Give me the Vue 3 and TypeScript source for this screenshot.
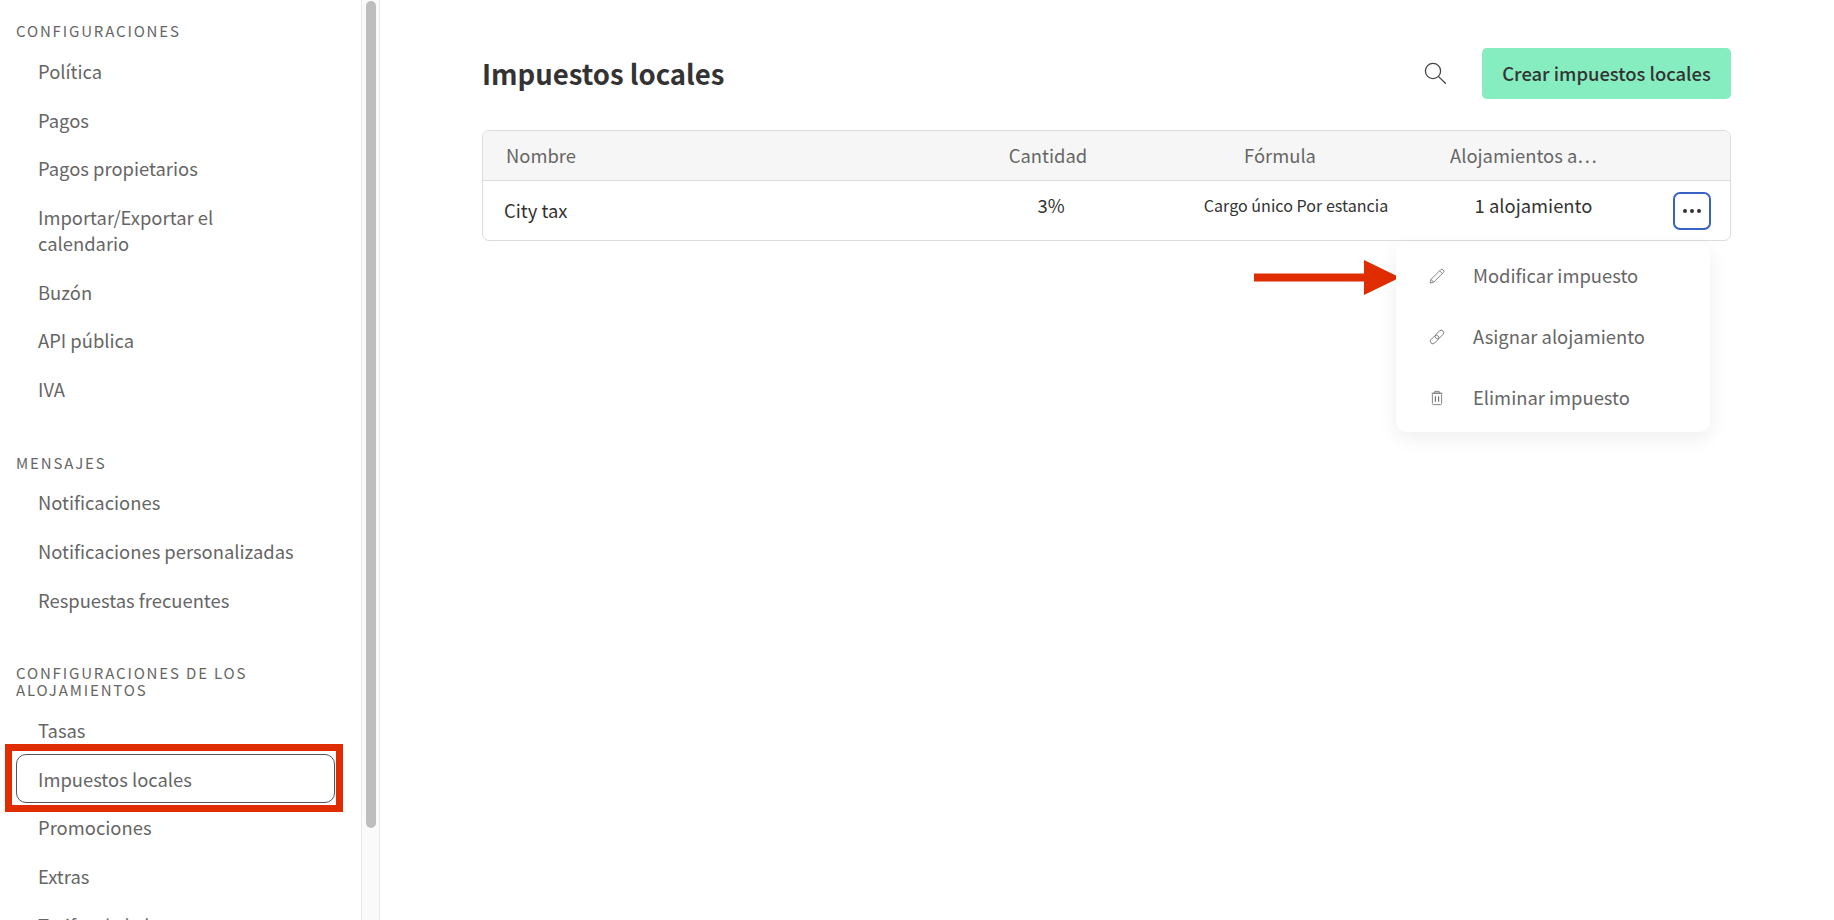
<template>
  <div class="page">
    <aside class="sidebar">
      <nav class="nav">
        <section v-for="group in groups" :key="group.title" class="group">
          <h3 class="group-title">{{ group.title }}</h3>
          <a
            v-for="item in group.items"
            :key="item"
            class="nav-item"
            :class="{ active: item === current }"
          >
            {{ item }}
            <span v-if="item === current" class="callout"></span>
          </a>
        </section>
      </nav>
      <div class="track"><div class="thumb"></div></div>
    </aside>

    <main class="main">
      <header class="head">
        <h1 class="title">Impuestos locales</h1>
        <svg class="search" width="24" height="24" viewBox="0 0 24 24" fill="none" stroke="#444" stroke-width="1.3">
          <circle cx="10" cy="10" r="7.6" />
          <path d="M15.6 15.6 22.4 22.2" stroke-linecap="round" />
        </svg>
        <button type="button" class="create">Crear impuestos locales</button>
      </header>

      <div class="table-wrap">
        <div class="table">
          <div class="row row-head">
            <div class="th th-name">Nombre</div>
            <div class="th th-qty">Cantidad</div>
            <div class="th th-formula">Fórmula</div>
            <div class="th th-rooms">Alojamientos a…</div>
            <div></div>
          </div>
          <div class="row row-body">
            <div class="td td-name">City tax</div>
            <div class="td td-center">3%</div>
            <div class="td td-center td-small">Cargo único Por estancia</div>
            <div class="td td-center">1 alojamiento</div>
            <div class="td-action">
              <button type="button" class="more" aria-label="Más">
                <i></i><i></i><i></i>
              </button>
            </div>
          </div>
        </div>

        <svg class="arrow" width="146" height="35" viewBox="0 0 146 35">
          <path d="M0 13.5H110V0L146 17.5 110 35V21.5H0Z" fill="#e02d00" />
        </svg>

        <ul class="menu">
          <li class="menu-item">
            <svg width="18" height="18" viewBox="0 0 18 18" fill="none" stroke="#777" stroke-width="0.9" stroke-linejoin="round">
              <path d="M2.2 16 3 12.4 12.8 2.6Q13.8 1.6 15.2 3 16.6 4.4 15.5 5.4L5.7 15.2Z" />
              <path d="M3 12.4 5.7 15.2M11.6 3.8l2.8 2.8" />
            </svg>
            <span>Modificar impuesto</span>
          </li>
          <li class="menu-item">
            <svg width="18" height="18" viewBox="0 0 18 18" fill="none" stroke="#777" stroke-width="0.9">
              <rect x="6.4" y="4" width="10" height="5" rx="2.5" transform="rotate(-45 11.4 6.5)" />
              <rect x="1.6" y="9" width="10" height="5" rx="2.5" transform="rotate(-45 6.6 11.5)" />
            </svg>
            <span>Asignar alojamiento</span>
          </li>
          <li class="menu-item">
            <svg width="18" height="18" viewBox="0 0 18 18" fill="none" stroke="#777" stroke-width="0.9">
              <path d="M3.6 4.2h10.8M6.8 4V2.4h4.4V4" />
              <rect x="4.4" y="4.2" width="9.2" height="11.4" rx="1.2" />
              <path d="M7.4 7.2v5.6M10.6 7.2v5.6" stroke-width="1.2" />
            </svg>
            <span>Eliminar impuesto</span>
          </li>
        </ul>
      </div>
    </main>
  </div>
</template>

<script setup lang="ts">
const current = 'Impuestos locales';

const groups: { title: string; items: string[] }[] = [
  {
    title: 'Configuraciones',
    items: ['Política', 'Pagos', 'Pagos propietarios', 'Importar/Exportar el calendario', 'Buzón', 'API pública', 'IVA'],
  },
  {
    title: 'Mensajes',
    items: ['Notificaciones', 'Notificaciones personalizadas', 'Respuestas frecuentes'],
  },
  {
    title: 'Configuraciones de los alojamientos',
    items: ['Tasas', 'Impuestos locales', 'Promociones', 'Extras', 'Tarifas de la luz'],
  },
];
</script>

<style>
html, body { margin: 0; background: #fff; overflow: hidden; }
</style>

<style scoped>
.page {
  display: flex;
  height: 920px;
  overflow: hidden;
  font-family: "Noto Sans CJK SC", "Noto Sans", sans-serif;
  font-size: 18.4px;
  line-height: 26px;
  color: #333;
}

/* sidebar */
.sidebar {
  flex: none;
  width: 380px;
  display: flex;
  height: 100%;
  box-sizing: border-box;
  border-right: 1px solid #e8e8e8;
}
.nav {
  flex: 1;
  min-width: 0;
  padding: 22px 26px 0 16px;
}
.group { margin-bottom: 40px; }
.group-title {
  margin: 0 0 7.5px;
  font-size: 15px;
  font-weight: 400;
  line-height: 17px;
  letter-spacing: 1.85px;
  text-transform: uppercase;
  color: #666;
}
.nav-item {
  position: relative;
  display: block;
  padding: 10.37px 34px 10.37px 21px;
  border: 1px solid transparent;
  box-sizing: border-box;
  color: #666;
  border-radius: 10px;
}
.nav-item.active { border-color: #555; }
.callout {
  position: absolute;
  inset: -11px -9px -10px -12px;
  border: 7px solid #e02d00;
}
.track {
  flex: none;
  width: 18px;
  box-sizing: border-box;
  padding: 1px 3px 0 4px;
  border-left: 1px solid #e8e8e8;
  background: #fafafa;
}
.thumb {
  height: 827px;
  border-radius: 5px;
  background: #bebebe;
}

/* main */
.main {
  flex: 1;
  min-width: 0;
  padding: 48px 103px 0 102px;
}
.head {
  display: flex;
  align-items: center;
  height: 51px;
}
.title {
  flex: 1;
  margin: 0;
  font-size: 27.5px;
  font-weight: 700;
  line-height: 51px;
  color: #333;
}
.search { margin: 0 35px 2px 0; }
.create {
  width: 249px;
  height: 51px;
  padding: 0 0 2px;
  border: 0;
  border-radius: 5px;
  background: #86edc0;
  font: inherit;
  font-weight: 500;
  color: #333;
}

.table-wrap {
  position: relative;
  margin-top: 31px;
}
.table {
  border: 1px solid #dcdcdc;
  border-radius: 7px;
  overflow: hidden;
}
.row {
  display: grid;
  grid-template-columns: 469px 198px 292px 183px 1fr;
  align-items: center;
}
.row-head {
  height: 49px;
  background: #f6f6f6;
  border-bottom: 1px solid #dcdcdc;
  color: #666;
}
.row-body { height: 59px; }
.th { padding-bottom: 2px; }
.th-name { padding-left: 23px; }
.th-qty { text-align: center; padding-right: 6px; }
.th-formula { text-align: center; padding-right: 32px; }
.th-rooms { padding-left: 8px; white-space: nowrap; }
.td-name { padding: 0 0 2px 21px; }
.td-center { text-align: center; margin-top: -12px; }
.td-small { font-size: 16.1px; }
.td-action { display: flex; padding-left: 48px; }
.more {
  display: flex;
  align-items: center;
  justify-content: center;
  gap: 3px;
  width: 38px;
  height: 38px;
  padding: 0;
  border: 2.5px solid #3a62c4;
  border-radius: 7px;
  background: #fff;
}
.more i {
  width: 4px;
  height: 4px;
  border-radius: 50%;
  background: #333;
}

.arrow {
  position: absolute;
  left: 772px;
  top: 130px;
}

.menu {
  position: absolute;
  top: 113px;
  right: 21px;
  width: 314px;
  height: 189px;
  margin: 0;
  padding: 2px 0 0;
  box-sizing: border-box;
  list-style: none;
  background: #fff;
  border-radius: 10px;
  box-shadow: 0 6px 20px rgba(0, 0, 0, 0.07);
}
.menu-item {
  display: flex;
  align-items: center;
  height: 61px;
  padding-left: 32px;
  color: #666;
}
.menu-item span { margin-bottom: 2px; }
.menu-item svg { flex: none; margin-right: 27px; }
</style>
